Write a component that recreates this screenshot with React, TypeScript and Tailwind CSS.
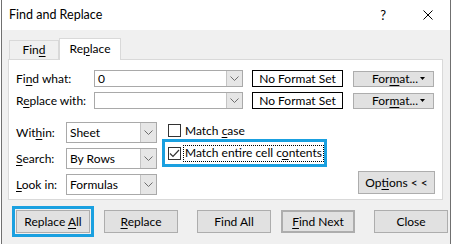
import type { ReactNode } from 'react';

const U = ({ children }: { children: ReactNode }) => (
  <span className="underline decoration-1 underline-offset-[2px]">{children}</span>
);

const Chevron = () => (
  <svg width="9" height="5" viewBox="0 0 9 5">
    <polyline points="0.5,0.5 4.5,4.5 8.5,0.5" fill="none" stroke="#6d6d6d" strokeWidth="1" />
  </svg>
);

const Combo = ({ value, className }: { value?: string; className: string }) => (
  <div className={`flex border border-[#a9a9a9] bg-white ${className}`}>
    <div className="flex flex-1 items-center pl-[3px]">
      <span>{value}</span>
    </div>
    <div className="flex w-[16px] items-center justify-center border-l border-[#c4c4c4] bg-[#e6e6e6]">
      <Chevron />
    </div>
  </div>
);

const NoFormat = () => (
  <div className="ml-[9px] flex h-[17px] w-[91px] items-center justify-center border border-black bg-white">
    <span>No Format Set</span>
  </div>
);

const FormatButton = () => (
  <div className="ml-[10px] flex h-[16px] w-[81px] items-center border border-[#adadad] bg-[#e1e1e1]">
    <span className="ml-[18px]">
      For<U>m</U>at...
    </span>
    <svg className="ml-auto mr-[8px]" width="5" height="3" viewBox="0 0 5 3">
      <polygon points="0,0 5,0 2.5,3" fill="#000" />
    </svg>
  </div>
);

const Checkbox = ({ checked }: { checked?: boolean }) => (
  <div className="flex h-[13px] w-[13px] shrink-0 items-center justify-center border border-[#333] bg-white">
    {checked && (
      <svg width="11" height="9" viewBox="0 0 11 9">
        <polyline points="1,4.5 4,7.5 10,1" fill="none" stroke="#333" strokeWidth="1.2" />
      </svg>
    )}
  </div>
);

const Button = ({ children, className = '' }: { children: ReactNode; className?: string }) => (
  <div className={`flex h-[23px] w-[74px] items-center justify-center border border-[#adadad] bg-[#e1e1e1] ${className}`}>
    <span>{children}</span>
  </div>
);

export default function App() {
  return (
    <div
      className="h-[244px] w-[452px] overflow-hidden whitespace-nowrap bg-white text-[12px] leading-none text-black"
      style={{ fontFamily: '"Segoe UI", Lato, sans-serif' }}
    >
      <div className="ml-[1px] h-full w-[450px] border-x border-[#707070]">
        {/* title bar */}
        <div className="flex h-[30px] items-center bg-white">
          <span className="ml-[7px] text-[12.5px]">Find and Replace</span>
          <span className="ml-auto mr-[37px] text-[13px]">?</span>
          <svg className="mr-[17px]" width="10" height="10" viewBox="0 0 10 10">
            <path d="M0.5 0.5 L9.5 9.5 M9.5 0.5 L0.5 9.5" stroke="#000" strokeWidth="1" />
          </svg>
        </div>

        <div className="h-full bg-[#f0f0f0]">
          {/* tabs */}
          <div className="flex h-[29px] items-end pl-[7px]">
            <div className="flex h-[19px] w-[50px] items-center justify-center border border-b-0 border-[#d9d9d9] bg-[#f0f0f0]">
              <span>
                Fin<U>d</U>
              </span>
            </div>
            <div className="relative z-10 -mb-px flex h-[22px] w-[62px] items-center justify-center border border-b-0 border-[#d9d9d9] bg-white pb-[2px]">
              <span>
                Re<U>p</U>lace
              </span>
            </div>
          </div>

          {/* panel */}
          <div className="ml-[6px] h-[141px] w-[435px] border border-[#d9d9d9] bg-white pl-[7px] pt-[10px]">
            <div className="flex h-[17px] items-center">
              <div className="w-[78px]">
                Fi<U>n</U>d what:
              </div>
              <Combo value="0" className="h-[17px] w-[149px]" />
              <NoFormat />
              <FormatButton />
            </div>
            <div className="mt-[5px] flex h-[17px] items-center">
              <div className="w-[78px]">
                R<U>e</U>place with:
              </div>
              <Combo className="h-[17px] w-[149px]" />
              <NoFormat />
              <FormatButton />
            </div>

            <div className="mt-[13px] flex">
              <div className="flex flex-col gap-[5px]">
                <div className="flex items-center">
                  <div className="w-[50px]">
                    Wit<U>h</U>in:
                  </div>
                  <Combo value="Sheet" className="h-[21px] w-[91px]" />
                </div>
                <div className="flex items-center">
                  <div className="w-[50px]">
                    <U>S</U>earch:
                  </div>
                  <Combo value="By Rows" className="h-[21px] w-[91px]" />
                </div>
                <div className="flex items-center">
                  <div className="w-[50px]">
                    <U>L</U>ook in:
                  </div>
                  <Combo value="Formulas" className="h-[21px] w-[91px]" />
                </div>
              </div>

              <div className="ml-[5px] flex flex-col">
                <div className="mt-[2px] flex items-center pl-[6px]">
                  <Checkbox />
                  <span className="ml-[4px]">
                    Match <U>c</U>ase
                  </span>
                </div>
                <div className="mt-[2px] h-[28px] w-[165px] border-[3px] border-[#1aa0e0] pl-[3px] pt-[3px]">
                  <div className="flex items-center">
                    <Checkbox checked />
                    <span className="ml-[2px] border border-dotted border-black px-px pb-[2px] pt-px">
                      Match entire cell c<U>o</U>ntents
                    </span>
                  </div>
                </div>
              </div>

              <Button className="ml-auto mr-[7px] mt-[49px] h-[22px] w-[77px]">
                Op<U>t</U>ions &lt; &lt;
              </Button>
            </div>
          </div>

          {/* buttons */}
          <div className="mt-[10px] flex pl-[14px]">
            <div className="-m-[4px] border-[3px] border-[#1aa0e0] p-px">
              <Button>
                Replace <U>A</U>ll
              </Button>
            </div>
            <Button className="ml-[14px]">
              <U>R</U>eplace
            </Button>
            <Button className="ml-[19px]">Find All</Button>
            <Button className="ml-[10px] border-2 border-[#0078d7]">
              <U>F</U>ind Next
            </Button>
            <Button className="ml-[19px]">Close</Button>
          </div>
        </div>
      </div>
    </div>
  );
}
